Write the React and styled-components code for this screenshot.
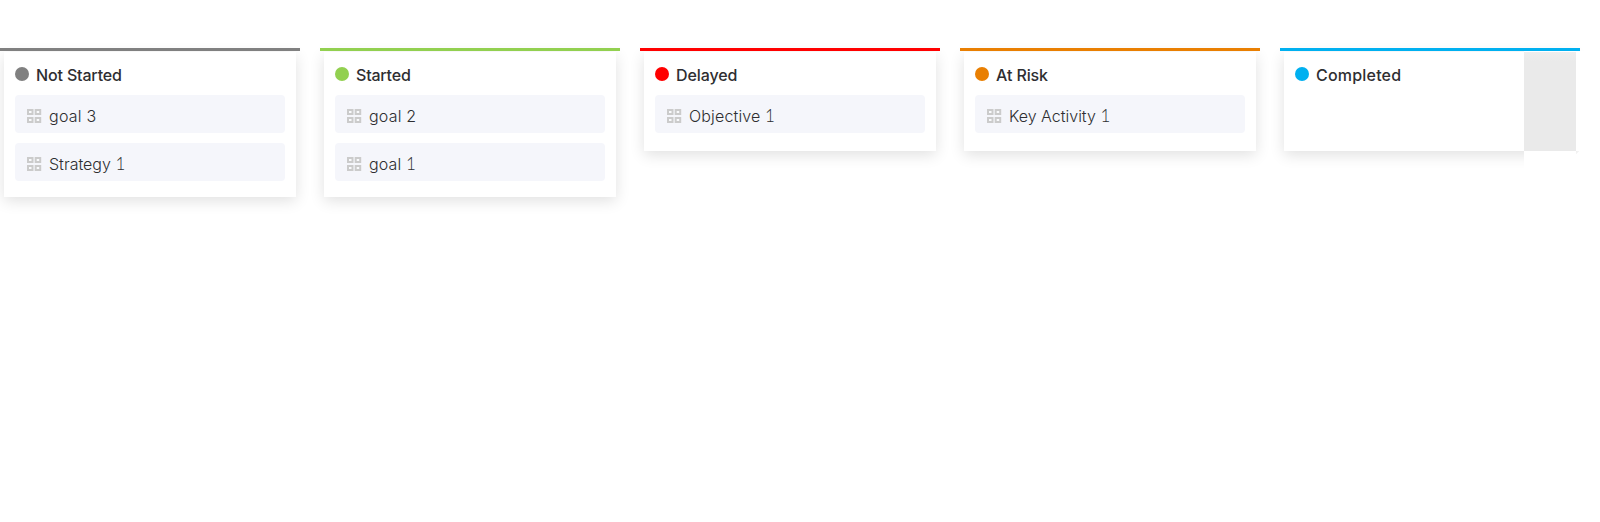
import React from "react";
import styled, { createGlobalStyle } from "styled-components";

const GlobalStyle = createGlobalStyle`
  body {
    margin: 0;
    background: #fff;
    color: #2e2e31;
    font-family: Inter, "Liberation Sans", sans-serif;
  }
`;

const Board = styled.main`
  display: flex;
  align-items: flex-start;
  gap: 20px;
  min-height: 522px;
  padding-top: 48px;
  box-sizing: border-box;
  overflow: hidden;
`;

const Column = styled.section`
  position: relative;
  flex: 0 0 300px;
`;

const StatusBar = styled.div`
  position: relative;
  z-index: 1;
  height: 3px;
  background: ${(p) => p.$color};
`;

const Card = styled.div`
  box-sizing: border-box;
  min-height: 99px;
  margin: 1px 4px 0;
  padding: 13px 11px 16px;
  background: #fff;
  box-shadow: 0 4px 14px rgba(0, 0, 0, 0.12);
`;

const Heading = styled.header`
  display: flex;
  align-items: center;
  gap: 7px;
  height: 20px;
  margin-bottom: 10px;
`;

const Dot = styled.span`
  width: 14px;
  height: 14px;
  margin-bottom: 2px;
  border-radius: 50%;
  background: ${(p) => p.$color};
`;

const Title = styled.h2`
  margin: 0;
  font-size: 16px;
  line-height: 20px;
  font-weight: 450;
  white-space: nowrap;
  letter-spacing: ${(p) => p.$tracking}px;
`;

const List = styled.div`
  display: flex;
  flex-direction: column;
  gap: 10px;
`;

const Item = styled.div`
  display: flex;
  align-items: center;
  box-sizing: border-box;
  height: 38px;
  padding-left: 12px;
  border-radius: 4px;
  background: #f5f6fb;
`;

const Label = styled.span`
  margin: 4px 0 0 7px;
  font-size: 16px;
  line-height: 22px;
  font-weight: 300;
  white-space: nowrap;
  letter-spacing: ${(p) => p.$tracking}px;
`;

const FootedDigit = styled.span`
  font-family: Lato, sans-serif;
  font-size: 17px;
  line-height: 1;
`;

const IconSvg = styled.svg`
  flex: none;
  margin-top: 4px;
`;

const Overflow = styled.div`
  position: absolute;
  top: 3px;
  left: 244px;
  width: 76px;
  height: 120px;
  background: #fff;
`;

const Shade = styled.div`
  width: 52px;
  height: 99px;
  margin-top: 1px;
  background: linear-gradient(#eee, #eaeaea 9px);
`;

const Corner = styled.div`
  width: 4px;
  height: 4px;
  margin-left: 52px;
  background: linear-gradient(135deg, #eee, #f7f7f7 50%, #fff 50%);
`;

function GridIcon() {
  return (
    <IconSvg width="15" height="14" viewBox="0 0 15 14" fill="#f9fafc" stroke="#cbcbcb" strokeWidth="2">
      <rect x="1" y="1" width="4.5" height="4" />
      <rect x="8.7" y="1" width="4.5" height="4" />
      <rect x="1" y="9" width="4.5" height="4" />
      <rect x="8.7" y="9" width="4.5" height="4" />
    </IconSvg>
  );
}

function LabelText({ text }) {
  if (!text.endsWith("1")) return text;
  return (
    <>
      {text.slice(0, -1)}
      <FootedDigit>1</FootedDigit>
    </>
  );
}

const columns = [
  { title: "Not Started", color: "#808080", tracking: -0.15, items: [["goal 3", 0.25], ["Strategy 1", 0]] },
  { title: "Started", color: "#92d050", tracking: -0.2, items: [["goal 2", 0.2], ["goal 1", 0.15]] },
  { title: "Delayed", color: "#ff0000", tracking: -0.1, items: [["Objective 1", 0.15]] },
  { title: "At Risk", color: "#e97f02", tracking: -0.1, items: [["Key Activity 1", 0]] },
  { title: "Completed", color: "#00b0f0", tracking: 0.2, items: [], overflow: true },
];

export default function App() {
  return (
    <>
      <GlobalStyle />
      <Board>
        {columns.map((c) => (
          <Column key={c.title}>
            <StatusBar $color={c.color} />
            <Card>
              <Heading>
                <Dot $color={c.color} />
                <Title $tracking={c.tracking}>{c.title}</Title>
              </Heading>
              <List>
                {c.items.map(([label, tracking]) => (
                  <Item key={label}>
                    <GridIcon />
                    <Label $tracking={tracking}>
                      <LabelText text={label} />
                    </Label>
                  </Item>
                ))}
              </List>
            </Card>
            {c.overflow && (
              <Overflow>
                <Shade />
                <Corner />
              </Overflow>
            )}
          </Column>
        ))}
      </Board>
    </>
  );
}
